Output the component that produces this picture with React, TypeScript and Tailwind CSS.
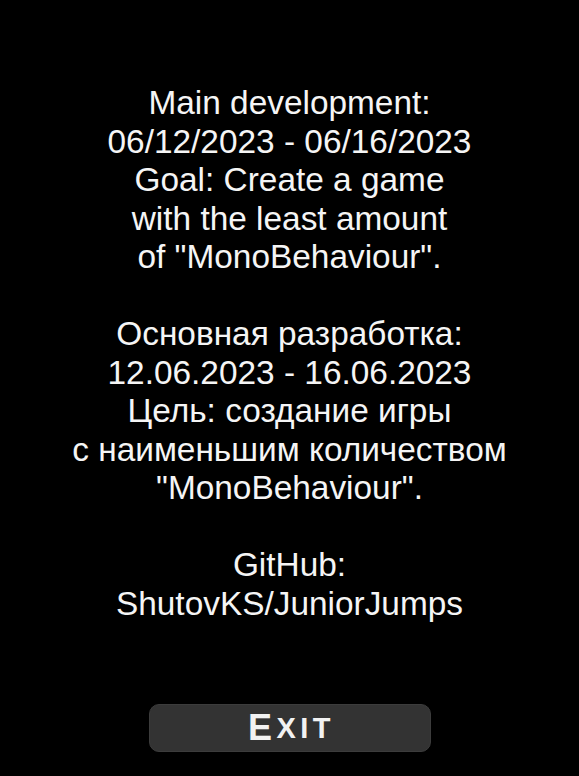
export default function App() {
  const lines = [
    "Main development:",
    "06/12/2023 - 06/16/2023",
    "Goal: Create a game",
    "with the least amount",
    'of "MonoBehaviour".',
    "",
    "Основная разработка:",
    "12.06.2023 - 16.06.2023",
    "Цель: создание игры",
    "с наименьшим количеством",
    '"MonoBehaviour".',
    "",
    "GitHub:",
    "ShutovKS/JuniorJumps",
  ];

  return (
    <div className="w-[579px] h-[776px] bg-black flex flex-col items-center font-['Liberation_Sans',Arial,sans-serif] text-white">
      {/* Info text */}
      <div className="pt-[84px] flex flex-col items-center text-[33.4px] leading-[38.5px] text-[#f5f5f5]">
        {lines.map((l, i) => (
          <div key={i} className="h-[38.5px] whitespace-nowrap">
            {l}
          </div>
        ))}
      </div>

      {/* Exit button */}
      <button className="mt-[81px] w-[282px] h-[48px] rounded-[10px] bg-[#333333] border border-[#3c3c3c] flex items-center justify-center font-bold text-[#f2f2f2] tracking-[4.5px] pl-[4px]">
        <span className="text-[36px] leading-none">E</span>
        <span className="text-[29px] leading-none">XIT</span>
      </button>
    </div>
  );
}
